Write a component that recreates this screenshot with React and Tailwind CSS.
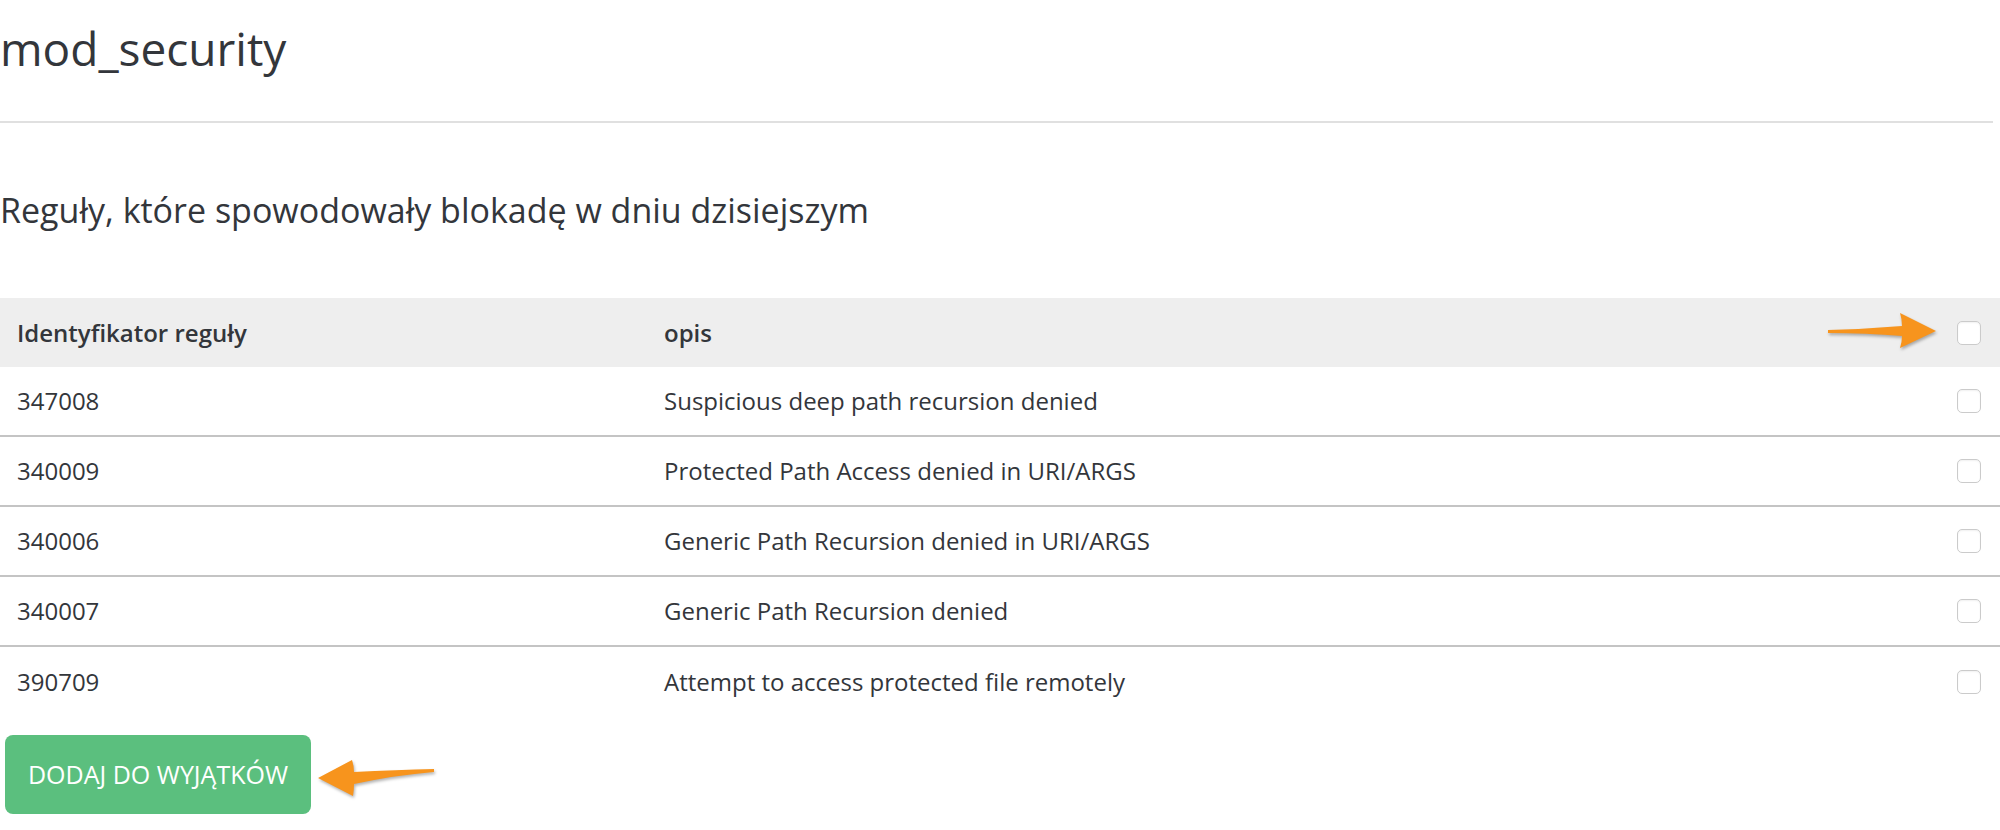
import React from "react";

const rules = [
  { id: "347008", opis: "Suspicious deep path recursion denied" },
  { id: "340009", opis: "Protected Path Access denied in URI/ARGS" },
  { id: "340006", opis: "Generic Path Recursion denied in URI/ARGS" },
  { id: "340007", opis: "Generic Path Recursion denied" },
  { id: "390709", opis: "Attempt to access protected file remotely" },
];

function Box() {
  return (
    <span className="block w-[24px] h-[24px] rounded-[5px] border-[1.5px] border-[#cbcbcb] bg-white shadow-[inset_0_1px_2px_rgba(0,0,0,0.06)]" />
  );
}

function ArrowRight() {
  return (
    <svg
      width="112"
      height="40"
      viewBox="0 0 112 40"
      className="absolute left-[1826px] top-[13px] drop-shadow-[1px_2px_1.5px_rgba(0,0,0,0.3)]"
    >
      <path
        d="M2 19 Q40 18 76 15 Q76 8 74 2 L110 20 L74 37 Q76 31 76 25 Q40 22 2 22 Z"
        fill="#f7941d"
      />
    </svg>
  );
}

function ArrowLeft() {
  return (
    <svg
      width="122"
      height="42"
      viewBox="0 0 122 42"
      className="absolute left-[316px] top-[22px] drop-shadow-[1px_2px_1.5px_rgba(0,0,0,0.3)]"
    >
      <path
        d="M2 21 L36 3 Q38 9 38 15 Q80 13 118 12 L118 15 Q80 18 38 27 Q38 33 37 39 Z"
        fill="#f7941d"
      />
    </svg>
  );
}

export default function App() {
  return (
    <div
      className="bg-white text-[#33363b] w-[2000px] min-h-[830px]"
      style={{ fontFamily: '"Open Sans", "Noto Sans", sans-serif' }}
    >
      <h1 className="text-[46px] leading-[50px] font-normal pt-[23px]">mod_security</h1>
      <div className="mt-[48px] h-[2px] bg-[#e0e0e0] mr-[7px]" />

      <h2 className="mt-[67px] text-[34px] leading-[40px] font-normal">
        Reguły, które spowodowały blokadę w dniu dzisiejszym
      </h2>

      <div className="mt-[68px] w-full text-[24px]">
        <div className="relative flex items-center h-[69px] bg-[#eeeeee] font-semibold">
          <div className="w-[664px] pl-[17px]">Identyfikator reguły</div>
          <div className="flex-1">opis</div>
          <div className="pr-[19px]">
            <Box />
          </div>
          <ArrowRight />
        </div>
        {rules.map((r, i) => (
          <div
            key={r.id}
            className={
              "flex items-center h-[70px] " +
              (i < rules.length - 1 ? "border-b-2 border-[#c4c4c4]" : "")
            }
          >
            <div className="w-[664px] pl-[17px]">{r.id}</div>
            <div className="flex-1">{r.opis}</div>
            <div className="pr-[19px]">
              <Box />
            </div>
          </div>
        ))}
      </div>

      <div className="relative mt-[18px] pl-[5px]">
        <button className="w-[306px] h-[79px] rounded-[8px] bg-[#5bbf7e] text-white text-[25px] font-medium">
          DODAJ DO WYJĄTKÓW
        </button>
        <ArrowLeft />
      </div>
    </div>
  );
}
